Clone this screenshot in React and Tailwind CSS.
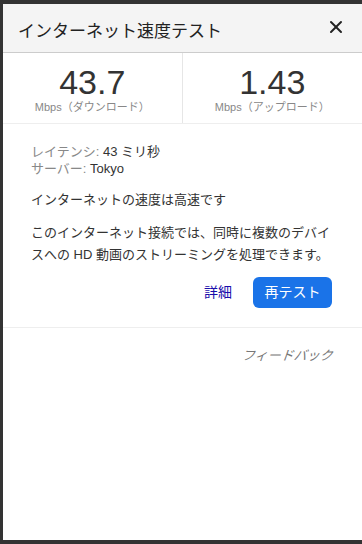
import { X } from "lucide-react";

const Stat = ({ value, label, border }) => (
  <div className={`flex flex-col items-center pt-[12px] ${border ? "border-r border-[#e6e6e6]" : ""}`}>
    <div className="text-[34px] leading-[34px] text-[#333]">{value}</div>
    <div className="text-[11px] leading-[14px] text-[#888] mt-[1px]">{label}</div>
  </div>
);

export default function App() {
  return (
    <div className="w-[362px] h-[544px] bg-[#333] pl-[3px] pt-[4px] pb-[4px] font-['Liberation_Sans',Arial,'Noto_Sans_CJK_JP',sans-serif]">
      <div className="bg-white h-full flex flex-col">
        {/* header */}
        <div className="h-[49px] shrink-0 bg-[#f4f4f4] border-b border-[#ccc] flex items-center justify-between pl-[15px] pr-[16px]">
          <span className="text-[17px] text-[#222] mt-[7px]">インターネット速度テスト</span>
          <X size={20} strokeWidth={2.4} className="text-[#222] mt-[-2px]" />
        </div>

        {/* stats */}
        <div className="grid grid-cols-2 h-[71px] border-b border-[#eee]">
          <Stat value="43.7" label="Mbps（ダウンロード）" border />
          <Stat value="1.43" label="Mbps（アップロード）" />
        </div>

        {/* details */}
        <div className="px-[28px] pt-[19px] text-[13px] text-[#333]">
          <div className="leading-[17px]">
            <div><span className="text-[#888]">レイテンシ: </span>43 ミリ秒</div>
            <div><span className="text-[#888]">サーバー: </span>Tokyo</div>
          </div>
          <p className="mt-[14px] leading-[17px]">インターネットの速度は高速です</p>
          <p className="mt-[14px] leading-[22px]">
            このインターネット接続では、同時に複数のデバイスへの HD 動画のストリーミングを処理できます。
          </p>
          <div className="flex items-center justify-end gap-[21px] mt-[11px] pr-[2px]">
            <span className="text-[#1a0dab] text-[14px]">詳細</span>
            <button className="w-[79px] h-[31px] rounded-[6px] bg-[#1a73e8] text-white text-[14px]">再テスト</button>
          </div>
        </div>

        <div className="border-b border-[#eee] mt-[19px]" />

        <div className="flex justify-end pr-[29px] pt-[18px]">
          <span className="inline-block italic -skew-x-6 text-[13px] text-[#777]">フィードバック</span>
        </div>
      </div>
    </div>
  );
}
